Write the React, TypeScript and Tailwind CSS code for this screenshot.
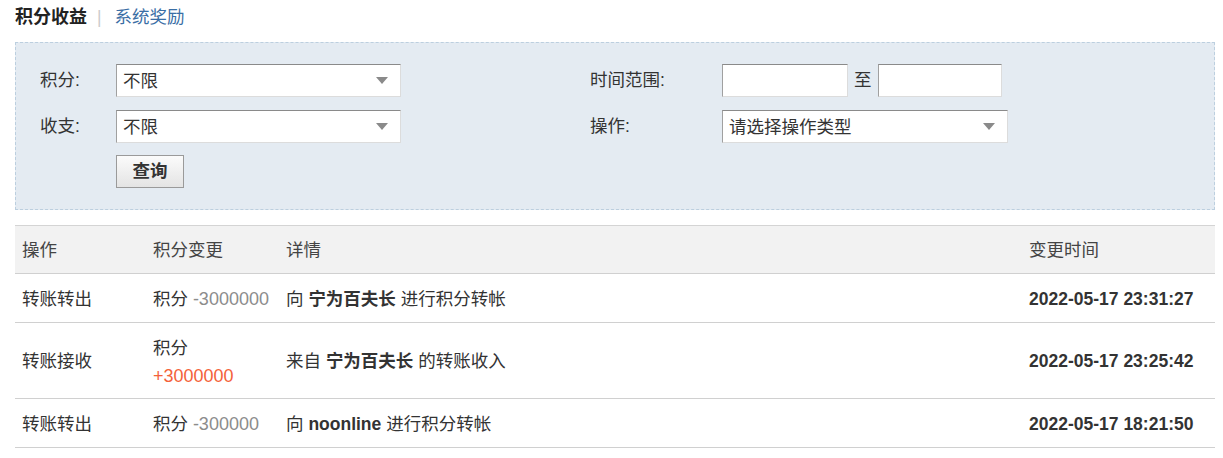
import type { ReactNode } from "react"

type Record = {
  id: number
  action: string
  amount: string
  income: boolean
  detail: ReactNode
  time: string
}

const records: Record[] = [
  {
    id: 1,
    action: "转账转出",
    amount: "-3000000",
    income: false,
    detail: (
      <>
        向 <b className="font-bold">宁为百夫长</b> 进行积分转帐
      </>
    ),
    time: "2022-05-17 23:31:27",
  },
  {
    id: 2,
    action: "转账接收",
    amount: "+3000000",
    income: true,
    detail: (
      <>
        来自 <b className="font-bold">宁为百夫长</b> 的转账收入
      </>
    ),
    time: "2022-05-17 23:25:42",
  },
  {
    id: 3,
    action: "转账转出",
    amount: "-300000",
    income: false,
    detail: (
      <>
        向 <b className="font-bold">noonline</b> 进行积分转帐
      </>
    ),
    time: "2022-05-17 18:21:50",
  },
]

function Arrow() {
  return (
    <svg width="12" height="7" viewBox="0 0 12 7" className="shrink-0">
      <path d="M0 0h12L6 7z" fill="#8a8a8a" />
    </svg>
  )
}

function Select({ value, width }: { value: string; width: string }) {
  return (
    <div
      className={`flex h-[33px] items-center justify-between border border-t-[#8a8a8a] border-l-[#a0a0a0] border-r-[#dcdcdc] border-b-[#dcdcdc] bg-white pl-[6px] pr-[12px] ${width}`}
    >
      <span className="leading-[20px]">{value}</span>
      <Arrow />
    </div>
  )
}

function TextBox({ width }: { width: string }) {
  return (
    <div
      className={`h-[33px] border border-t-[#8a8a8a] border-l-[#a0a0a0] border-r-[#dcdcdc] border-b-[#dcdcdc] bg-white ${width}`}
    />
  )
}

function FilterPanel() {
  return (
    <div className="h-[168px] border border-dashed border-[#bccfdf] bg-[#e4ebf2] pl-[24px] pt-[21px] text-[#333]">
      <div className="flex h-[33px] items-center">
        <div className="flex w-[550px] items-center">
          <span className="w-[76px]">积分:</span>
          <Select value="不限" width="w-[285px]" />
        </div>
        <span className="w-[132px]">时间范围:</span>
        <TextBox width="w-[126px]" />
        <span className="mx-[6px]">至</span>
        <TextBox width="w-[124px]" />
      </div>

      <div className="mt-[13px] flex h-[33px] items-center">
        <div className="flex w-[550px] items-center">
          <span className="w-[76px]">收支:</span>
          <Select value="不限" width="w-[285px]" />
        </div>
        <span className="w-[132px]">操作:</span>
        <Select value="请选择操作类型" width="w-[286px]" />
      </div>

      <div className="mt-[12px] pl-[76px]">
        <button className="h-[33px] w-[68px] border border-[#9a9a9a] bg-gradient-to-b from-[#fbfbfb] to-[#e4e4e4] font-bold text-[#333]">
          查询
        </button>
      </div>
    </div>
  )
}

const cols = "grid grid-cols-[131px_133px_1fr_193px]"

export default function App() {
  return (
    <div className="min-h-[458px] bg-white pl-[15px] pr-[8px] font-['Liberation_Sans','Noto_Sans_CJK_SC',sans-serif] text-[17.5px] text-[#333]">
      <div className="flex h-[42px] items-start pt-[4px] leading-[26px]">
        <span className="text-[18px] font-bold text-[#222]">积分收益</span>
        <span className="ml-[10px] mr-[13px] text-[#ccc]">|</span>
        <span className="text-[#3a6ea5]">系统奖励</span>
      </div>

      <FilterPanel />

      <div className="mt-[15px] border-t border-[#d4d4d4]">
        <div className={`${cols} h-[48px] items-center border-b border-[#d0d0d0] bg-[#f2f2f2] pt-[2px] text-[#444]`}>
          <div className="pl-[7px]">操作</div>
          <div className="pl-[7px]">积分变更</div>
          <div className="pl-[7px]">详情</div>
          <div className="pl-[7px]">变更时间</div>
        </div>

        {records.map((r) => (
          <div
            key={r.id}
            className={`${cols} items-center border-b border-[#d0d0d0] pt-[2px] ${r.income ? "h-[76px]" : "h-[49px]"}`}
          >
            <div className="pl-[7px]">{r.action}</div>
            <div className="pl-[7px] leading-[28px]">
              {r.income ? (
                <>
                  <div>积分</div>
                  <div className="text-[18px] text-[#f4623a]">{r.amount}</div>
                </>
              ) : (
                <span>
                  积分 <span className="text-[18px] text-[#8c8c8c]">{r.amount}</span>
                </span>
              )}
            </div>
            <div className="pl-[7px]">{r.detail}</div>
            <div className="pl-[7px] font-bold text-[#333]">{r.time}</div>
          </div>
        ))}
      </div>
    </div>
  )
}
